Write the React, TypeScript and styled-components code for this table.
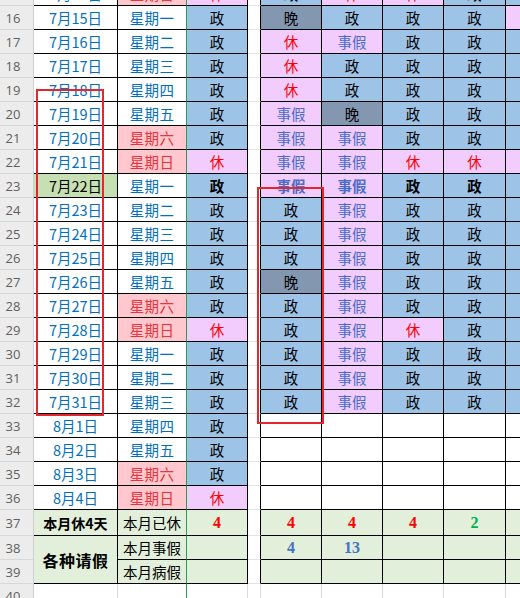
import React from 'react';
import styled, { createGlobalStyle } from 'styled-components';

const Global = createGlobalStyle`
  html, body { margin: 0; padding: 0; background: #fff; }
  body { width: 520px; height: 598px; overflow: hidden; }
`;

const Viewport = styled.div`
  position: relative;
  width: 520px;
  height: 598px;
  overflow: hidden;
  background: #fff;
`;

const Sheet = styled.div`
  display: grid;
  grid-template-columns: 34px 84px 69px 61px 13px 61px 61px 61px 62px 61px;
  grid-template-rows: repeat(22, 24px) 26px repeat(3, 24px);
  margin-top: -18px;
`;

type CellProps = {
  $bg?: string;
  $color?: string;
  $bold?: boolean;
  $line?: string;
  $right?: string;
  $span?: number;
};

const Cell = styled.div<CellProps>`
  box-sizing: border-box;
  display: flex;
  align-items: center;
  justify-content: center;
  padding-top: 1px;
  background: ${(p) => p.$bg ?? '#fff'};
  color: ${(p) => p.$color ?? '#000'};
  font-family: "Noto Sans CJK SC", "Noto Sans", sans-serif;
  font-size: 14.5px;
  font-weight: ${(p) => (p.$bold ? 700 : 400)};
  line-height: 1;
  white-space: nowrap;
  overflow: hidden;
  border-bottom: 1px solid ${(p) => p.$line ?? '#000'};
  border-right: 1px solid ${(p) => p.$right ?? p.$line ?? '#000'};
  grid-row: ${(p) => (p.$span ? `span ${p.$span}` : 'auto')};
`;

const RowHead = styled.div`
  box-sizing: border-box;
  display: flex;
  align-items: center;
  justify-content: center;
  padding-right: 7px;
  background: #ececec;
  color: #5f5f5f;
  font-family: "Open Sans", "Noto Sans", sans-serif;
  font-size: 13px;
  border-bottom: 1px solid #d7d7d7;
  border-right: 1px solid #cfcfcf;
`;

const DateCell = styled(Cell)`
  font-size: 14.5px;
`;

const DayCell = styled(Cell)`
  letter-spacing: 0.3px;
`;

const GapCell = styled(Cell)`
  border-bottom-color: #e3e3e3;
`;

const LabelCell = styled(Cell)<{ $size?: number }>`
  font-size: ${(p) => p.$size ?? 14.5}px;
  letter-spacing: ${(p) => (p.$size && p.$size > 15 ? 0.5 : 0)}px;
`;

const CountCell = styled(Cell)`
  font-family: "Liberation Serif", "DejaVu Serif", serif;
  font-size: 16px;
  font-weight: 700;
`;

const RedFrame = styled.div<{ $x: number; $y: number; $w: number; $h: number }>`
  position: absolute;
  box-sizing: border-box;
  left: ${(p) => p.$x}px;
  top: ${(p) => p.$y}px;
  width: ${(p) => p.$w}px;
  height: ${(p) => p.$h}px;
  border: 2px solid #e5262d;
  pointer-events: none;
`;

const BLUE = '#9dc3e6';
const VIOLET = '#f2ccfd';
const DARK = '#8497b0';
const WEEKEND = '#ffc7ce';
const SUM = '#e2efda';
const HILITE = '#c6e0b4';
const FREEZE = '#22a05a';
const GRID = '#dadada';

const shifts: Record<string, { bg: string; color: string; text: string }> = {
  z: { bg: BLUE, color: '#000', text: '政' },
  x: { bg: VIOLET, color: '#ff0000', text: '休' },
  s: { bg: VIOLET, color: '#4a6cc8', text: '事假' },
  w: { bg: DARK, color: '#000', text: '晚' },
  e: { bg: '#fff', color: '#000', text: '' },
};

type DayRow = {
  n: number;
  date: string;
  day: string;
  d: string;
  rest: string;
  hi?: boolean;
  bold?: boolean;
};

const days: DayRow[] = [
  { n: 15, date: '7月14日', day: '星期日', d: 'x', rest: 'zxxzz' },
  { n: 16, date: '7月15日', day: '星期一', d: 'z', rest: 'wzzzx' },
  { n: 17, date: '7月16日', day: '星期二', d: 'z', rest: 'xszzz' },
  { n: 18, date: '7月17日', day: '星期三', d: 'z', rest: 'xzzzz' },
  { n: 19, date: '7月18日', day: '星期四', d: 'z', rest: 'xzzzz' },
  { n: 20, date: '7月19日', day: '星期五', d: 'z', rest: 'swzzz' },
  { n: 21, date: '7月20日', day: '星期六', d: 'z', rest: 'sszzz' },
  { n: 22, date: '7月21日', day: '星期日', d: 'x', rest: 'ssxxx' },
  { n: 23, date: '7月22日', day: '星期一', d: 'z', rest: 'sszzz', hi: true, bold: true },
  { n: 24, date: '7月23日', day: '星期二', d: 'z', rest: 'zszzz' },
  { n: 25, date: '7月24日', day: '星期三', d: 'z', rest: 'zszzz' },
  { n: 26, date: '7月25日', day: '星期四', d: 'z', rest: 'zszzz' },
  { n: 27, date: '7月26日', day: '星期五', d: 'z', rest: 'wszzz' },
  { n: 28, date: '7月27日', day: '星期六', d: 'z', rest: 'zszzz' },
  { n: 29, date: '7月28日', day: '星期日', d: 'x', rest: 'zsxzz' },
  { n: 30, date: '7月29日', day: '星期一', d: 'z', rest: 'zszzz' },
  { n: 31, date: '7月30日', day: '星期二', d: 'z', rest: 'zszzz' },
  { n: 32, date: '7月31日', day: '星期三', d: 'z', rest: 'zszzz' },
  { n: 33, date: '8月1日', day: '星期四', d: 'z', rest: 'eeeee' },
  { n: 34, date: '8月2日', day: '星期五', d: 'z', rest: 'eeeee' },
  { n: 35, date: '8月3日', day: '星期六', d: 'z', rest: 'eeeee' },
  { n: 36, date: '8月4日', day: '星期日', d: 'x', rest: 'eeeee' },
];

const isWeekend = (day: string) => day === '星期六' || day === '星期日';

const ShiftRow = ({ r }: { r: DayRow }) => {
  const dShift = shifts[r.d];
  return (
    <>
      <RowHead>{r.n}</RowHead>
      <DateCell $bg={r.hi ? HILITE : '#fff'} $color={r.hi ? '#000' : '#0070c0'}>
        {r.date}
      </DateCell>
      <DayCell
        $bg={isWeekend(r.day) ? WEEKEND : '#fff'}
        $color={isWeekend(r.day) ? '#e8333b' : '#0070c0'}
        $right={FREEZE}
      >
        {r.day}
      </DayCell>
      <Cell $bg={dShift.bg} $color={dShift.color} $bold={r.bold}>
        {dShift.text}
      </Cell>
      <GapCell />
      {r.rest.split('').map((code, i) => {
        const s = shifts[code];
        return (
          <Cell key={i} $bg={s.bg} $color={s.color} $bold={r.bold}>
            {s.text}
          </Cell>
        );
      })}
    </>
  );
};

const counts = [
  { a: '4', b: '4', c: '4', d: '2' },
];

export default function App() {
  return (
    <Viewport>
      <Global />
      <Sheet>
        {days.map((r) => (
          <ShiftRow key={r.n} r={r} />
        ))}

        <RowHead>37</RowHead>
        <LabelCell $bg={SUM} $bold $size={14}>本月休4天</LabelCell>
        <LabelCell $bg={SUM} $right={FREEZE}>本月已休</LabelCell>
        <CountCell $bg={SUM} $color="#ff0000">4</CountCell>
        <GapCell />
        <CountCell $bg={SUM} $color="#ff0000">{counts[0].a}</CountCell>
        <CountCell $bg={SUM} $color="#ff0000">{counts[0].b}</CountCell>
        <CountCell $bg={SUM} $color="#ff0000">{counts[0].c}</CountCell>
        <CountCell $bg={SUM} $color="#00b050">{counts[0].d}</CountCell>
        <CountCell $bg={SUM} />

        <RowHead>38</RowHead>
        <LabelCell $bg={SUM} $bold $size={16} $span={2}>各种请假</LabelCell>
        <LabelCell $bg={SUM} $right={FREEZE}>本月事假</LabelCell>
        <CountCell $bg={SUM} />
        <GapCell />
        <CountCell $bg={SUM} $color="#4472c4">4</CountCell>
        <CountCell $bg={SUM} $color="#4472c4">13</CountCell>
        <CountCell $bg={SUM} />
        <CountCell $bg={SUM} />
        <CountCell $bg={SUM} />

        <RowHead>39</RowHead>
        <LabelCell $bg={SUM} $right={FREEZE}>本月病假</LabelCell>
        <CountCell $bg={SUM} />
        <GapCell />
        <CountCell $bg={SUM} />
        <CountCell $bg={SUM} />
        <CountCell $bg={SUM} />
        <CountCell $bg={SUM} />
        <CountCell $bg={SUM} />

        <RowHead>40</RowHead>
        <Cell $line={GRID} />
        <Cell $line={GRID} $right={FREEZE} />
        <Cell $line={GRID} />
        <Cell $line={GRID} />
        <Cell $line={GRID} />
        <Cell $line={GRID} />
        <Cell $line={GRID} />
        <Cell $line={GRID} />
        <Cell $line={GRID} />
      </Sheet>
      <RedFrame $x={36} $y={89} $w={68} $h={327} />
      <RedFrame $x={257} $y={187} $w={67} $h={237} />
    </Viewport>
  );
}
